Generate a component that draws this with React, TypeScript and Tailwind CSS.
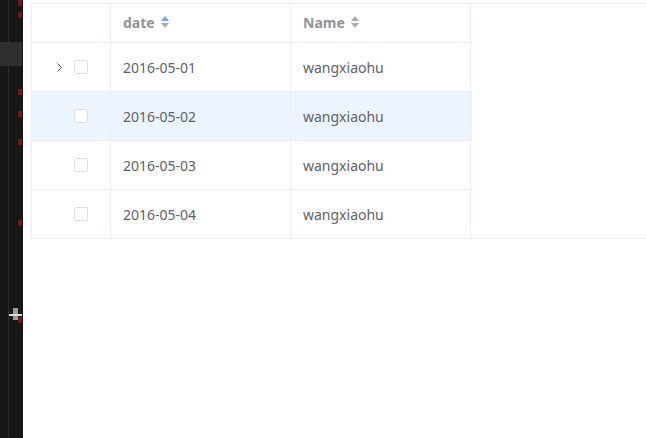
import React from "react";

const rows = ["2016-05-01", "2016-05-02", "2016-05-03", "2016-05-04"];

function Caret({ active }: { active?: boolean }) {
  return (
    <svg width="10" height="14" viewBox="0 0 10 14" className="ml-[5px] -mt-[1px]">
      <polygon points="1,6 5,1 9,6" fill={active ? "#7da7d9" : "#a8abb2"} />
      <polygon points="1,8 9,8 5,13" fill="#a8abb2" />
    </svg>
  );
}

function Checkbox() {
  return <div className="w-[14px] h-[14px] rounded-[2px] border border-[#dcdfe6] bg-white" />;
}

export default function App() {
  const reds = [0, 12, 89, 111, 139, 220, 317];
  return (
    <div className="flex h-[438px] w-[646px] overflow-hidden bg-white" style={{ fontFamily: '"Noto Sans", "Open Sans", sans-serif' }}>
      <div className="relative w-[23px] shrink-0 bg-[#171717]">
        <div className="absolute left-[8px] top-0 h-full w-px bg-[#2c2c2c]" />
        <div className="absolute left-0 top-[42px] h-[24px] w-[22px] bg-[#2f2f2f]" />
        {reds.map((y, i) => (
          <div key={i} className="absolute left-[18px] h-[6px] w-[4px] bg-[#7a1414]" style={{ top: y }} />
        ))}
        <div className="absolute left-[13px] top-[308px] h-[12px] w-[5px] bg-[#9a9a9a]" />
        <div className="absolute left-[9px] top-[314px] h-[2px] w-[13px] bg-[#d8e0d8]" />
      </div>
      <div className="ml-[8px] mt-[3px]">
        <div className="w-[616px] border-t border-b border-l border-[#ebeef5] text-[14px]">
          <div className="flex h-[39px] border-b border-[#ebeef5] w-[440px] font-bold text-[#909399]">
            <div className="w-[79px] border-r border-[#ebeef5]" />
            <div className="w-[180px] border-r border-[#ebeef5] flex items-center pl-[12px] -mt-[1px]">
              date<Caret active />
            </div>
            <div className="w-[180px] border-r border-[#ebeef5] flex items-center pl-[12px] -mt-[1px]">
              Name<Caret />
            </div>
          </div>
          {rows.map((d, i) => (
            <div key={d} className={`flex w-[440px] text-[#606266] ${i < 3 ? "h-[49px] border-b border-[#ebeef5]" : "h-[48px]"} ${i === 1 ? "bg-[#ecf5ff]" : ""}`}>
              <div className="w-[79px] border-r border-[#ebeef5] flex items-center">
                <div className="w-[42px] flex pl-[25px]">
                  {i === 0 && (
                    <svg width="5" height="9" viewBox="0 0 5 9">
                      <polyline points="0.5,0.5 4.5,4.5 0.5,8.5" fill="none" stroke="#606266" strokeWidth="1" />
                    </svg>
                  )}
                </div>
                <Checkbox />
              </div>
              <div className="w-[180px] border-r border-[#ebeef5] flex items-center pl-[12px]">{d}</div>
              <div className="w-[180px] border-r border-[#ebeef5] flex items-center pl-[12px]">wangxiaohu</div>
            </div>
          ))}
        </div>
      </div>
    </div>
  );
}
